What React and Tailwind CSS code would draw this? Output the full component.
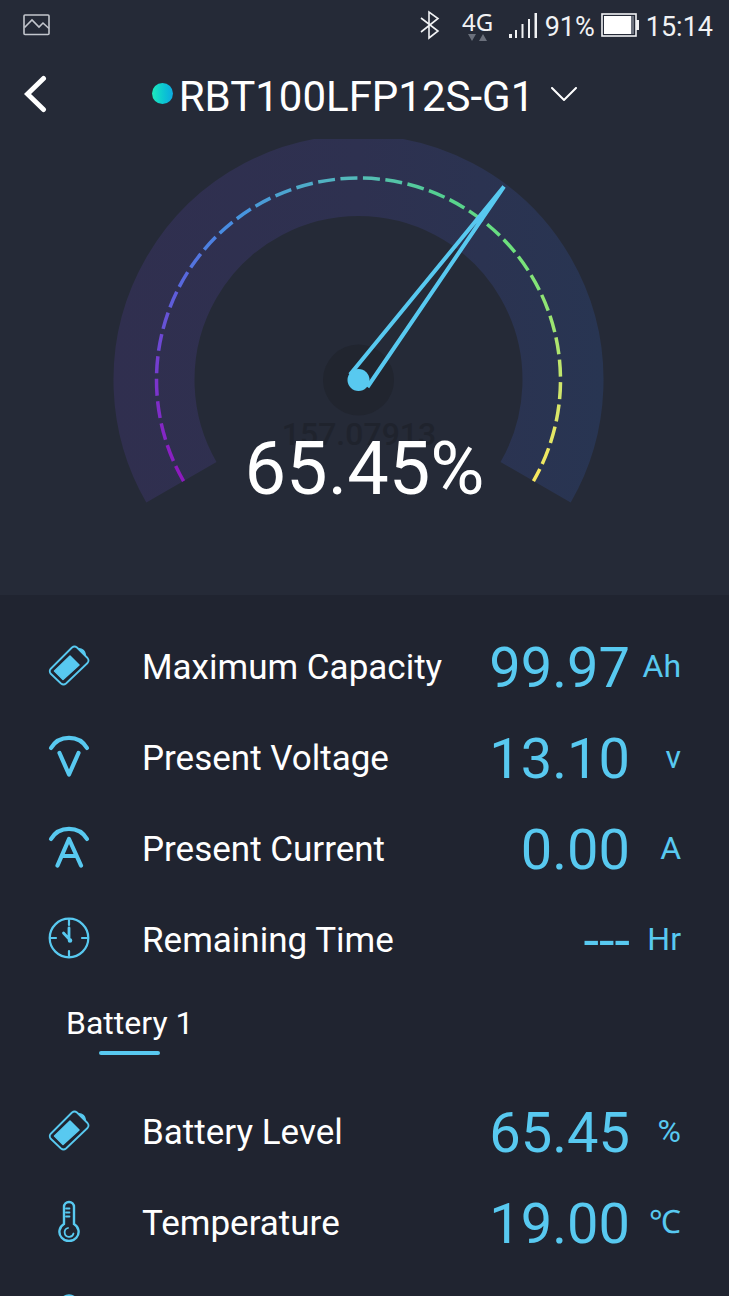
import React from 'react';

const GAUGE = { cx: 358.5, cy: 241, bandRadius: 204.5, dashRadius: 202, start: 210, sweep: 240 };

const SCALE_STOPS = [
  [0, [143, 23, 189]],
  [0.12, [122, 53, 204]],
  [0.24, [90, 100, 220]],
  [0.34, [70, 145, 226]],
  [0.5, [84, 188, 184]],
  [0.6, [84, 208, 144]],
  [0.7, [109, 225, 125]],
  [0.8, [151, 229, 114]],
  [0.88, [205, 230, 108]],
  [1, [250, 231, 94]]
];

function scaleColor(t) {
  const i = Math.max(1, SCALE_STOPS.findIndex(([stop]) => stop >= t));
  const [t0, a] = SCALE_STOPS[i - 1];
  const [t1, b] = SCALE_STOPS[i];
  const k = (t - t0) / (t1 - t0);
  return `rgb(${a.map((v, n) => Math.round(v + (b[n] - v) * k)).join(',')})`;
}

function point(radius, t) {
  const angle = ((GAUGE.start - GAUGE.sweep * t) * Math.PI) / 180;
  return [GAUGE.cx + radius * Math.cos(angle), GAUGE.cy - radius * Math.sin(angle)];
}

function arc(radius, from, to) {
  const large = (to - from) * GAUGE.sweep > 180 ? 1 : 0;
  return `M${point(radius, from).join(' ')}A${radius} ${radius} 0 ${large} 1 ${point(radius, to).join(' ')}`;
}

// each dash is 17 long with a 5.5 gap
const ARC_LENGTH = (GAUGE.dashRadius * GAUGE.sweep * Math.PI) / 180;
const dashes = [];
for (let s = 0; s < ARC_LENGTH; s += 22.5) {
  dashes.push([s / ARC_LENGTH, Math.min(1, (s + 17) / ARC_LENGTH)]);
}

function BatteryIcon() {
  return (
    <svg viewBox="0 0 42 42" className="size-[42px]" fill="none" stroke="#58c9f0" strokeLinejoin="round">
      <path d="M2.500 25L24 3.500q2.500-2 5 0L39.500 14q2 2.500 0 5L18 39.500q-2.500 2-5 0L2.500 29.500q-1.500-2.500 0-4.500z" strokeWidth="1.800" />
      <path d="M6.500 27L22 12l9 9L15 35.500z" fill="#58c9f0" strokeWidth="1.500" />
      <path d="M30.500 4.500q3 0 5 2t2 5z" fill="#58c9f0" strokeWidth="1.200" />
    </svg>
  );
}

function MeterIcon({ letter }) {
  return (
    <svg viewBox="0 0 42 42" className="size-[42px]" fill="none" stroke="#58c9f0" strokeWidth="4.200" strokeLinecap="round" strokeLinejoin="round">
      <path d="M3 13C11-.5 31-.5 39 13" />
      {letter === 'V' ? <path d="M11.500 18L21 39.500 30.500 18" /> : <path d="M9.500 39.500L21 13l12 26.500M14 30h14" />}
    </svg>
  );
}

function ClockIcon() {
  return (
    <svg viewBox="0 0 42 42" className="size-[42px]" fill="none" stroke="#58c9f0" strokeWidth="2.200" strokeLinecap="round">
      <circle cx="21" cy="21" r="19.300" />
      <path d="M21 3v5M21 34v5M3 21h5M34 21h5" />
      <path d="M21 11v11M15.500 16l6 6.500" strokeWidth="2.800" />
      <circle cx="22" cy="23.500" r="1.200" fill="#58c9f0" />
    </svg>
  );
}

function ThermometerIcon() {
  return (
    <svg viewBox="0 0 42 42" className="size-[42px]" fill="none" stroke="#58c9f0" strokeWidth="2.400" strokeLinecap="round">
      <path d="M16 24V7a5 5 0 0 1 10 0v17a9.600 9.200 0 1 1-10 0" />
      <path d="M18 8.500h3.500M18 12.500h3.500M18 16.500h3.500" strokeWidth="1.800" />
      <path d="M20 28a4.500 4.500 0 1 0 5.500 5.500" strokeWidth="1.800" />
    </svg>
  );
}

function StateIcon() {
  return (
    <svg viewBox="0 0 42 42" className="size-[42px]" fill="none" stroke="#58c9f0" strokeWidth="2.400">
      <circle cx="21" cy="13.500" r="9" />
      <path d="M21 22.500v16" />
    </svg>
  );
}

const SUMMARY = [
  { icon: <BatteryIcon />, label: 'Maximum Capacity', value: '99.97', unit: 'Ah' },
  { icon: <MeterIcon letter="V" />, label: 'Present Voltage', value: '13.10', unit: 'v' },
  { icon: <MeterIcon letter="A" />, label: 'Present Current', value: '0.00', unit: 'A' },
  { icon: <ClockIcon />, label: 'Remaining Time', value: '---', unit: 'Hr' }
];

const BATTERY = [
  { icon: <BatteryIcon />, label: 'Battery Level', value: '65.45', unit: '%' },
  { icon: <ThermometerIcon />, label: 'Temperature', value: '19.00', unit: '℃' },
  { icon: <StateIcon />, label: '', value: '', unit: '' }
];

function Row({ icon, label, value, unit }) {
  return (
    <li className="flex h-[91px] items-center px-12">
      <span className="mr-[52px] shrink-0 pb-[6px]">{icon}</span>
      <span className="flex-1 whitespace-nowrap text-[35px] leading-10 text-white">{label}</span>
      <span className="text-[56px] leading-[64px]">{value}</span>
      <span className="w-[51px] pb-1 text-right text-[32px] leading-10">{unit}</span>
    </li>
  );
}

function StatusBar() {
  return (
    <div className="flex h-12 items-center pt-[2px] pl-[23px] pr-4 text-[27px] leading-8 text-[#f1f2f4]">
      <svg viewBox="0 0 28 22" className="h-[22px] w-7" fill="none" stroke="#c3c6cd" strokeWidth="1.600">
        <rect x="1" y="1" width="25" height="19.500" rx="1" />
        <path d="M1.500 13.500L9 6l7 7 4-4 6 5.500" />
      </svg>
      <svg viewBox="0 0 20 30" className="ml-auto h-[30px] w-5" fill="none" stroke="currentColor" strokeWidth="1.600">
        <path d="M1 8l17 13-9 7V2l9 6.500L1 22" />
      </svg>
      <div className="ml-[22px] flex w-8 flex-col items-center">
        <span className="font-['Noto_Sans'] text-[24px] leading-6">4G</span>
        <svg viewBox="0 0 20 7" className="h-[7px] w-5" fill="#6b707c">
          <path d="M0 0h8L4 7zM11 7h8l-4-7z" />
        </svg>
      </div>
      <svg viewBox="0 0 29 25" className="ml-[15px] h-[25px] w-[29px]" fill="currentColor">
        <path d="M0 21h3v4H0zM6 17h2v8H6zM12.500 11h2v14h-2zM19 6h2v19h-2zM25.500 0h2.500v25h-2.500z" />
      </svg>
      <span className="ml-[7px] pt-[3px]">91%</span>
      <svg viewBox="0 0 38 24" className="ml-[6px] h-6 w-[38px]" fill="none" stroke="currentColor">
        <rect x="1" y="1" width="34" height="22" strokeWidth="1.600" />
        <rect x="3" y="3" width="30" height="18" fill="#6b707c" stroke="none" />
        <rect x="3" y="3" width="27" height="18" fill="white" stroke="none" />
        <rect x="35" y="7" width="3" height="10" fill="currentColor" stroke="none" />
      </svg>
      <span className="ml-[7px] pt-[3px]">15:14</span>
    </div>
  );
}

function Gauge() {
  return (
    <div className="relative">
      <svg viewBox="0 0 729 456" className="block w-full">
        <defs>
          <linearGradient id="band" gradientUnits="userSpaceOnUse" x1="113" y1="0" x2="604" y2="0">
            <stop offset="0" stopColor="#302f4f" />
            <stop offset="0.5" stopColor="#2e3150" />
            <stop offset="1" stopColor="#283552" />
          </linearGradient>
        </defs>
        <path d={arc(GAUGE.bandRadius, 0, 1)} fill="none" stroke="url(#band)" strokeWidth="81" />
        {dashes.map(([from, to]) => (
          <path key={from} d={arc(GAUGE.dashRadius, from, to)} fill="none" stroke={scaleColor((from + to) / 2)} strokeWidth="3.5" />
        ))}
        <circle cx="358.5" cy="241" r="35.500" fill="#21252f" />
        <text x="359" y="306" textAnchor="middle" fontSize="32" fontWeight="500" fill="#1f232d">157.07913</text>
        <path d="M350 235.500L504 47.500 367.500 248" fill="none" stroke="#58c9f0" strokeWidth="4" strokeLinejoin="bevel" />
        <circle cx="358.5" cy="241" r="11" fill="#58c9f0" />
      </svg>
      <p className="absolute inset-x-0 top-[286px] text-center text-[74px] leading-[88px] text-white">65.45%</p>
    </div>
  );
}

export default function App() {
  return (
    <div className="h-screen overflow-hidden bg-[#202430] font-[Roboto,sans-serif] text-[#58c9f0]">
      <header className="bg-[#252a37]">
        <StatusBar />
        <div className="relative flex h-[91px] items-center justify-center text-white">
          <button aria-label="Back" className="absolute left-6">
            <svg viewBox="0 0 24 38" className="h-[38px] w-6" fill="none" stroke="currentColor" strokeWidth="5" strokeLinecap="round" strokeLinejoin="miter">
              <path d="M19.500 3.500L3.500 19l16 15.500" />
            </svg>
          </button>
          <button className="flex items-center text-[42px] leading-[50px]">
            <span className="mr-[6px] size-[21px] rounded-full bg-linear-to-r from-[#1fe9bb] to-[#10a9e0]" />
            <span className="pt-[6px]">RBT100LFP12S-G1</span>
            <svg viewBox="0 0 26 14" className="ml-[17px] h-[14px] w-[26px]" fill="none" stroke="currentColor" strokeWidth="2" strokeLinecap="round">
              <path d="M1 1l12 12L25 1" />
            </svg>
          </button>
        </div>
        <Gauge />
      </header>
      <main className="pt-[27px]">
        <ul>
          {SUMMARY.map((row) => (
            <Row key={row.label} {...row} />
          ))}
        </ul>
        <div className="h-[101px] px-[66px] pt-[17px]">
          <button className="flex flex-col items-center text-[32px] leading-10 text-white">
            Battery 1
            <span className="mt-2 h-1 w-[61px] rounded-full bg-[#58c9f0]" />
          </button>
        </div>
        <ul>
          {BATTERY.map((row) => (
            <Row key={row.label} {...row} />
          ))}
        </ul>
      </main>
    </div>
  );
}
